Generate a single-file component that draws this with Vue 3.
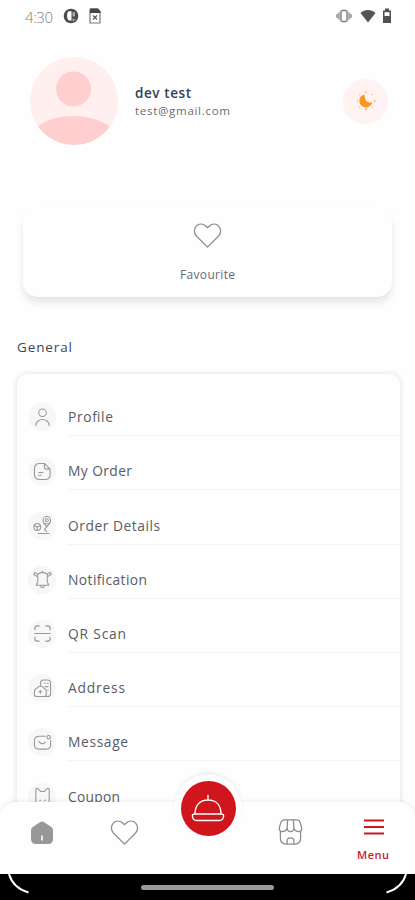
<script setup>
const rows = [
  { id: 'profile', label: 'Profile', width: 45 },
  { id: 'order', label: 'My Order', width: 64 },
  { id: 'details', label: 'Order Details', width: 92 },
  { id: 'bell', label: 'Notification', width: 79 },
  { id: 'scan', label: 'QR Scan', width: 58 },
  { id: 'address', label: 'Address', width: 57 },
  { id: 'message', label: 'Message', width: 60 },
  { id: 'coupon', label: 'Coupon', width: 52 },
]
</script>

<template>
  <div class="screen">
    <header class="status">
      <span class="time">4:30</span>
      <svg class="st-p" viewBox="0 0 16 16"><circle cx="8" cy="8" r="7.3" fill="#4b4b4b" /><path d="M5.500 3.200h3v9.300H6C3.500 11 3.500 5 5.500 3.200z" fill="#fff" /><path d="M9.500 4h2.500v4.500H9.500z" fill="#aaa" /><path d="M9 10.500l4 .5-3 3z" fill="#959595" /></svg>
      <svg class="st-sim" viewBox="0 0 12 16"><path d="M1 1h7.500L11 3.500V15H1z" fill="#fff" stroke="#777" stroke-width="1.200" /><path d="M1.500.5h7.500L11.500 3.500V5H.7z" fill="#444" /><path d="M4 7.500l4 4m0-4l-4 4" stroke="#555" stroke-width="1.100" /></svg>
      <span class="spacer"></span>
      <svg class="st-vib" viewBox="0 0 16 14"><path d="M1 5v4M3 3.500v7M13 3.500v7M15 5v4" stroke="#aaa" stroke-width="1.900" /><rect x="5" y="1.500" width="6" height="11" rx="1.500" fill="#fff" stroke="#858585" stroke-width="1.500" /></svg>
      <svg class="st-wifi" viewBox="0 0 16 14"><path d="M.5 4C4 0 12 0 15.500 4L8 13.500z" fill="#555" /></svg>
      <svg class="st-bat" viewBox="0 0 10 16"><path d="M3 .5h4v2h2V15H1V2.500h2z" fill="#505050" /><path d="M2.500 4.200h5V8h-5z" fill="#fff" /></svg>
    </header>

    <main class="content">
      <section class="account">
        <svg class="avatar" viewBox="0 0 88 88">
          <defs><clipPath id="face"><circle cx="44" cy="44" r="44" /></clipPath></defs>
          <circle cx="44" cy="44" r="44" fill="#ffefee" />
          <circle cx="43.500" cy="32" r="17.500" fill="#ffcfcf" />
          <path clip-path="url(#face)" d="M6 71C22 55 64 55 81 71V90H6z" fill="#ffcfcf" />
        </svg>
        <div class="who">
          <svg class="name" width="60" height="19"><text x="0" y="14.500" textLength="56">dev test</text></svg>
          <svg class="mail" width="100" height="17"><text x="0" y="12.500" textLength="95">test@gmail.com</text></svg>
        </div>
        <button class="theme" aria-label="Theme">
          <svg viewBox="0 0 24 24"><path d="M10.500 5.200C4 6 3 14 7.500 17.500c4.500 3.500 10.500.5 11.300-4.500-3.500 2.500-8.500-.5-8.300-7.800z" fill="#f8991d" /><g fill="#f9b070"><circle cx="12" cy="2.500" r="1" /><circle cx="18.500" cy="5" r=".8" /><circle cx="21.500" cy="12" r="1" /><circle cx="19" cy="18.500" r=".8" /><circle cx="12" cy="21" r="1.100" /><circle cx="5" cy="19" r=".7" /><circle cx="2.500" cy="12" r=".7" /><circle cx="5" cy="5" r=".7" /></g></svg>
        </button>
      </section>

      <section class="favourite">
        <svg class="heart" viewBox="0 0 30 27"><path d="M15 25.500L3.500 14C-2.500 7 6-2.800 13.500 4L15 5.400 16.500 4C24-2.800 32.500 7 26.500 14z" /></svg>
        <svg class="fav-label" width="56" height="18"><text x="0" y="13" textLength="55">Favourite</text></svg>
      </section>

      <h2 class="heading"><svg width="60" height="20"><text x="0" y="15" textLength="55">General</text></svg></h2>

      <section class="list">
        <div v-for="row in rows" :key="row.id" class="row">
          <span class="badge">
            <svg viewBox="0 0 20 20">
              <template v-if="row.id === 'profile'"><circle cx="10" cy="5" r="4" /><path d="M3 18.500c0-8.500 14-8.500 14 0" /></template>
              <template v-else-if="row.id === 'order'"><path d="M7 1.500h5l6 6V13c0 3.500-1.500 5.500-5 5.500H7c-3.500 0-5.500-2-5.500-5.500V7C1.500 3.500 3.500 1.500 7 1.500zM12 1.500v3.800c0 1.500.8 2.200 2.300 2.200H18M6 11h4.500M6 14h2.500" /></template>
              <template v-else-if="row.id === 'details'"><circle cx="14.500" cy="4.500" r="4" /><circle cx="14.500" cy="4.500" r="1.600" /><path d="M11 7l3.500 4.500L18 7M14.500 11.500L12 14l2.500 2.500M5.500 18.500H17" /><circle cx="4.500" cy="11.500" r="3.600" /><path d="M1.500 10l3 1.800 3-1.800M4.500 12v3" /></template>
              <template v-else-if="row.id === 'bell'"><path d="M5 4.500Q10 .5 15 4.500V12l1.500 4h-13L5 12zM8 16.500c0 2.700 4 2.700 4 0M10 2.800V1M5 4.500L2 2.500.8 4.500l3 2M15 4.500l3-2 1.200 2-3 2" /></template>
              <template v-else-if="row.id === 'scan'"><path d="M2 6V4.500Q2 2 4.500 2H6.500M13.500 2h2Q18 2 18 4.500V6M18 14v1.500q0 2.500-2.500 2.500h-2M6.500 18h-2Q2 18 2 15.500V14M2 10h16" stroke-width="1.300" /></template>
              <template v-else-if="row.id === 'address'"><path d="M8 7.500V4q0-3 3-3h4q3.500 0 3.500 3.500v11q0 3-3 3h-2M2.500 10.800l4-3q1.500-1 3 0l3.500 3q1 1 1 2V16q0 2.500-2.500 2.500H4Q1.500 18.500 1.500 16v-3q0-1.400 1-2.200zM7.700 12v3M6.200 13.500h3M12 4.500h1M15 4.500h1M13 8h3M15.500 11.500h.5" /></template>
              <template v-else-if="row.id === 'message'"><path d="M13 3.500H6.500C3 3.500 1.500 5 1.500 8v4.500c0 3 1.500 4.500 5 4.500h7c3.500 0 5-1.500 5-4.500V8M6 9l2.500 1.800c1 .7 2 .7 3 0L13 9.600" /><circle cx="16.500" cy="4.500" r="1.800" /></template>
              <template v-else><path d="M3 3q0-2 2-1.500l3 3.200h4l3-3.200q2-.5 2 1.500v15.500l-2-1.300-2 1.300-3-1.500-3 1.500-2-1.300-2 1.300zM7 14h1M12 14h1" /></template>
            </svg>
          </span>
          <div class="row-body">
            <svg class="row-label" width="110" height="22"><text x="0" y="17.500" :textLength="row.width">{{ row.label }}</text></svg>
          </div>
        </div>
      </section>
    </main>

    <nav class="nav">
      <a class="tab"><svg class="home" viewBox="0 0 24 24"><path d="M10 1.200q2-1.200 4 0l7 4.500Q23 7 23 9v9q0 5-5 5H6q-5 0-5-5V9q0-2 2-3.300z" fill="#989898" /><path d="M12 15v4" stroke="#fff" stroke-width="1.500" stroke-linecap="round" /></svg></a>
      <a class="tab"><svg class="heart" viewBox="0 0 30 27"><path d="M15 25.500L3.500 14C-2.500 7 6-2.800 13.500 4L15 5.400 16.500 4C24-2.800 32.500 7 26.500 14z" /></svg></a>
      <span class="tab"></span>
      <a class="tab"><svg class="store" viewBox="0 0 26 27"><path d="M2.500 12.800V20q0 6 6 6h9q6 0 6-6v-7.200M7 1h12q3.500 0 4.500 4l1 4q.8 4-3.200 4-4.300 0-4.800-4L16 1M7 1Q3.500 1 2.500 5l-1 4q-.8 4 3.200 4Q9 13 9.500 9L10 1M9.500 9q0 4 3.500 4t3.500-4M9.500 26v-3.500q0-3 3.500-3t3.500 3V26" /></svg></a>
      <a class="tab active">
        <svg class="burger" viewBox="0 0 20 16"><path d="M0 1.500h20M0 8h20M0 14.500h20" /></svg>
        <svg class="menu-label" width="34" height="14"><text x="0" y="11" textLength="32">Menu</text></svg>
      </a>
      <div class="fab"><div class="fab-disc"><svg viewBox="0 0 34 30"><path d="M17 7V2.500M4 21C4 12 9 7 17 7s13 5 13 14M3.500 21h27q2.500 0 2 2.500-.7 4-4 4h-23q-3.300 0-4-4Q1 21 3.500 21z" /></svg></div></div>
    </nav>

    <footer class="system">
      <svg class="corner" viewBox="0 0 22 20"><path d="M1 0Q5 14 20.500 18.500" /></svg>
      <span class="handle"></span>
      <svg class="corner right" viewBox="0 0 22 20"><path d="M1 0Q5 14 20.500 18.500" /></svg>
    </footer>
  </div>
</template>

<style>
body { background: #fefefe; }
</style>

<style scoped>
* { box-sizing: border-box; }
.screen { position: relative; display: flex; flex-direction: column; width: 415px; height: 900px; overflow: hidden; background: #fefefe; font-family: "Open Sans", "Noto Sans", sans-serif; color: #4c5060; }
svg { display: block; flex: none; }
svg text { fill: currentColor; }
.status { display: flex; align-items: center; height: 33px; padding: 0 23px 0 25px; flex: none; }
.status svg { position: relative; top: -.5px; }
.time { width: 38px; font: 300 15px/20px "Open Sans", sans-serif; letter-spacing: -.4px; color: #808080; }
.st-p { width: 16px; height: 16px; }
.st-sim { width: 12px; height: 16px; margin-left: 10px; }
.spacer { flex: 1; }
.st-vib { width: 16px; height: 14px; }
.st-wifi { width: 16px; height: 14px; margin-left: 8px; }
.st-bat { width: 10px; height: 16px; margin-left: 6px; }
.content { flex: 1; min-height: 0; overflow: hidden; }
.account { display: flex; align-items: center; height: 88px; margin: 24px 27px 0 30px; }
.avatar { width: 88px; height: 88px; }
.who { flex: 1; margin-left: 17px; }
.name { font-size: 13.500px; font-weight: 600; color: #35405a; }
.mail { font-size: 11.500px; color: #686c76; }
.theme { display: flex; align-items: center; justify-content: center; width: 45px; height: 45px; padding: 0; border: 0; border-radius: 50%; background: #fff2f2; }
.theme svg { width: 22px; height: 22px; }
.favourite { display: flex; flex-direction: column; align-items: center; height: 90px; margin: 62px 23px 0; padding-top: 15px; border-radius: 15px; background: #fefefe; box-shadow: 0 6px 8px -1px #0000001c; }
.heart { width: 29px; height: 27px; fill: none; stroke: #8c8c8c; stroke-width: 1.300; stroke-linejoin: round; }
.fav-label { margin-top: 17px; font-size: 12px; color: #656a78; }
.heading { margin: 39.500px 0 0 17px; font-size: 13.500px; font-weight: 500; line-height: 0; color: #3c4457; }
.list { height: 520px; margin: 17.500px 15px 0 17px; padding-top: 8px; border-radius: 11px; background: #fefefe; box-shadow: 0 0 4px 2px #00000013; }
.row { display: flex; align-items: flex-end; height: 54.200px; padding-left: 11px; }
.badge { display: flex; align-items: center; justify-content: center; width: 28px; height: 28px; margin-bottom: 5px; border-radius: 50%; background: #f7f7f7; }
.badge svg { width: 19px; height: 19px; fill: none; stroke: #999; stroke-width: 1.150; stroke-linecap: round; stroke-linejoin: round; }
.row-body { flex: 1; height: 32px; margin-left: 12px; border-bottom: 1px solid #f3f3f3; }
.row-label { font-size: 13.800px; color: #585c67; }
.nav { position: absolute; left: 0; right: 0; bottom: 26px; display: flex; height: 72px; border-radius: 16px 16px 0 0; background: #fefefe; box-shadow: 0 -1px 4px #00000014; }
.tab { display: flex; flex-direction: column; align-items: center; flex: 1; padding-top: 16.500px; }
.home { width: 24px; height: 24px; margin-top: 2px; }
.store { width: 25px; height: 26px; margin-top: .5px; fill: none; stroke: #8b8b8b; stroke-width: 1.300; }
.tab.active { color: #c92030; }
.burger { width: 20px; height: 16px; margin-top: .5px; stroke: #cc1820; stroke-width: 2; }
.menu-label { margin-top: 13px; font-size: 11px; font-weight: 600; }
.fab { position: absolute; left: 174px; top: -28px; display: flex; align-items: center; justify-content: center; width: 68px; height: 68px; border-radius: 50%; background: #fefefe; box-shadow: 0 -2px 3px #0000000f; }
.fab-disc { display: flex; align-items: center; justify-content: center; width: 55px; height: 55px; border-radius: 50%; background: #d0161c; }
.fab-disc svg { width: 34px; height: 30px; fill: none; stroke: #fff; stroke-width: 1.400; stroke-linecap: round; }
.system { display: flex; align-items: flex-start; justify-content: space-between; height: 26px; flex: none; padding: 0 8px; background: #000; }
.handle { width: 133px; height: 5px; margin-top: 11px; border-radius: 3px; background: #999; }
.corner { width: 22px; height: 20px; fill: none; stroke: #fff; stroke-width: 2; }
.right { transform: scaleX(-1); }
</style>
